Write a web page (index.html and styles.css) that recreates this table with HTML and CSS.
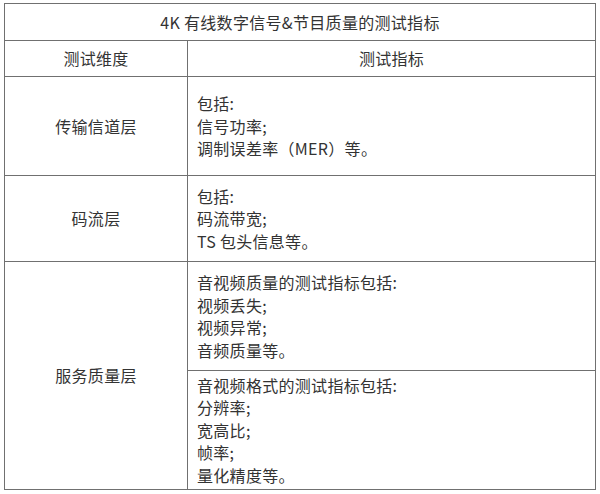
FILE: index.html
```html
<!DOCTYPE html>
<html lang="zh-CN">
<head>
<meta charset="utf-8">
<title>4K 有线数字信号&amp;节目质量的测试指标</title>
<link rel="stylesheet" href="styles.css">
</head>
<body>
<div class="page">
<table class="spec">
  <colgroup>
    <col class="col-dim">
    <col class="col-ind">
  </colgroup>
  <tr class="r-title">
    <td colspan="2" class="center">4K 有线数字信号&amp;节目质量的测试指标</td>
  </tr>
  <tr class="r-head">
    <td class="center">测试维度</td>
    <td class="center">测试指标</td>
  </tr>
  <tr class="r-1">
    <td class="center">传输信道层</td>
    <td class="list">包括:<br>信号功率;<br>调制误差率（MER）等。</td>
  </tr>
  <tr class="r-2">
    <td class="center">码流层</td>
    <td class="list">包括:<br>码流带宽;<br>TS 包头信息等。</td>
  </tr>
  <tr class="r-3a">
    <td class="center" rowspan="2">服务质量层</td>
    <td class="list">音视频质量的测试指标包括:<br>视频丢失;<br>视频异常;<br>音频质量等。</td>
  </tr>
  <tr class="r-3b">
    <td class="list">音视频格式的测试指标包括:<br>分辨率;<br>宽高比;<br>帧率;<br>量化精度等。</td>
  </tr>
</table>
</div>
</body>
</html>
```

FILE: styles.css
```css
html, body {
  margin: 0;
  padding: 0;
  background: #ffffff;
}

.page {
  padding: 3px 0 0 4px;
}

.spec {
  border-collapse: collapse;
  width: 592px;
  table-layout: fixed;
  font-family: "Noto Sans CJK SC", "Noto Sans", sans-serif;
  font-size: 16px;
  line-height: 22.5px;
  letter-spacing: 0.3px;
  color: #333333;
}

.col-dim {
  width: 183px;
}

.spec td {
  border: 1px solid #707070;
  padding: 0 9px;
  vertical-align: middle;
  box-sizing: border-box;
}

.spec td.center {
  text-align: center;
}

.spec td.list {
  text-align: left;
}

.r-title td { height: 37px; }
.r-head td { height: 36px; }
.r-1 td { height: 99px; }
.r-2 td { height: 86px; }
.r-3a td { height: 109px; }
.r-3b td { height: 119px; }
```
